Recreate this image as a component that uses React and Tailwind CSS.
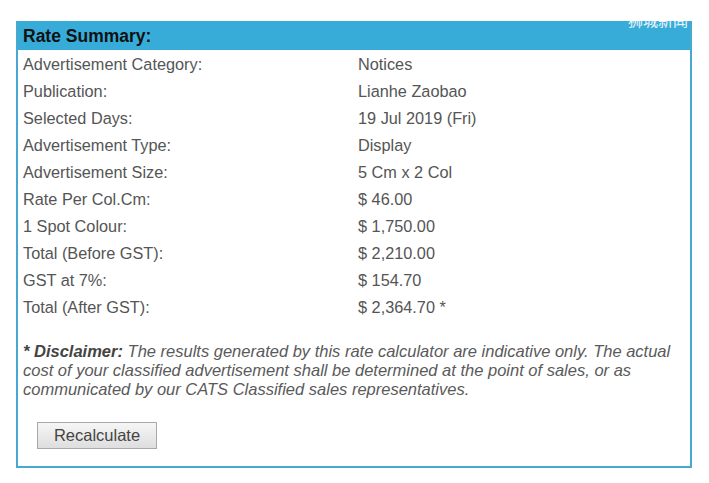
import React from 'react'

const ROWS = [
  ['Advertisement Category:', 'Notices'],
  ['Publication:', 'Lianhe Zaobao'],
  ['Selected Days:', '19 Jul 2019 (Fri)'],
  ['Advertisement Type:', 'Display'],
  ['Advertisement Size:', '5 Cm x 2 Col'],
  ['Rate Per Col.Cm:', '$ 46.00'],
  ['1 Spot Colour:', '$ 1,750.00'],
  ['Total (Before GST):', '$ 2,210.00'],
  ['GST at 7%:', '$ 154.70'],
  ['Total (After GST):', '$ 2,364.70 *'],
]

export default function App() {
  return (
    <div className="w-[709px] h-[483px] bg-white overflow-hidden font-['Liberation_Sans','Noto_Sans_CJK_SC',sans-serif]">
      <div className="relative ml-[16px] mt-[21px] w-[676px] h-[447px] border-x-2 border-b-2 border-[#49a8cf] bg-white">
        {/* watermark */}
        <div className="absolute right-[-2px] top-[-10px] w-[64px] h-[20px] overflow-hidden">
          <span className="block text-[15px] leading-[20px] text-white/90 whitespace-nowrap">狮城新闻</span>
        </div>

        <div className="h-[29px] bg-[#37acd9] px-[5px] flex items-center pt-[2px]">
          <h2 className="text-[17.5px] font-bold text-[#111]">Rate Summary:</h2>
        </div>

        <div className="px-[5px] text-[16.3px] text-[#555]">
          {ROWS.map(([label, value]) => (
            <div key={label} className="flex h-[27px] items-center pt-[2px]">
              <span className="w-[335px]">{label}</span>
              <span>{value}</span>
            </div>
          ))}
        </div>

        <p className="mt-[22px] pl-[5px] pr-[10px] text-[16.5px] leading-[19px] italic text-[#5a5a5a]">
          <strong className="font-bold text-[#444]">* Disclaimer:</strong> The results generated by this rate calculator are indicative only. The actual cost of your classified advertisement shall be determined at the point of sales, or as communicated by our CATS Classified sales representatives.
        </p>

        <div className="mt-[23px] pl-[19px]">
          <button className="w-[120px] h-[27px] border border-[#a9a9a9] bg-gradient-to-b from-[#f6f6f6] to-[#dedede] text-[16.5px] text-[#444]">
            Recalculate
          </button>
        </div>
      </div>
    </div>
  )
}
